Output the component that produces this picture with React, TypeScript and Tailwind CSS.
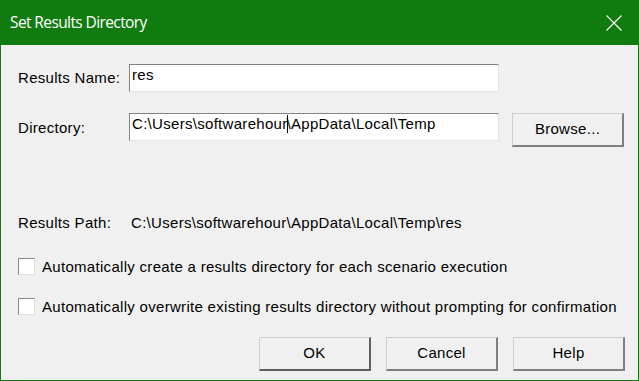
import React from 'react';

function Input({ value, caretAt }: { value: string; caretAt?: number }) {
  const before = caretAt !== undefined ? value.slice(0, caretAt) : value;
  const after = caretAt !== undefined ? value.slice(caretAt) : '';
  return (
    <div className="w-[370px] h-[28px] bg-white border border-t-[#828282] border-l-[#828282] border-r-[#e3e3e3] border-b-[#e3e3e3] pl-[2px] pt-[1px] text-[15px] leading-[18px] text-black whitespace-nowrap overflow-hidden">
      {before}
      {caretAt !== undefined && <span className="inline-block w-px h-[18px] bg-black align-top -mx-px" />}
      {after}
    </div>
  );
}

function Button({ label, isDefault }: { label: string; isDefault?: boolean }) {
  return (
    <button
      className={
        'w-[112px] h-[34px] bg-[#f0f0f0] border border-r-2 border-b-2 text-[15px] text-black border-t-[#cdcdcd] border-l-[#cdcdcd] ' +
        (isDefault ? 'border-r-[#5f5f5f] border-b-[#5f5f5f]' : 'border-r-[#808080] border-b-[#808080]')
      }
    >
      {label}
    </button>
  );
}

function Checkbox({ label }: { label: string }) {
  return (
    <div className="flex items-center gap-[7px] h-[18px]">
      <div className="w-[17px] h-[17px] bg-white border border-t-[#8a8a8a] border-l-[#8a8a8a] border-r-[#dcdcdc] border-b-[#dcdcdc]" />
      <span className="text-[15px] leading-[18px] text-black">{label}</span>
    </div>
  );
}

export default function App() {
  return (
    <div className="w-[639px] h-[381px] flex flex-col bg-[#107c10] font-['Liberation_Sans',Arial,sans-serif] tracking-[0.3px]">
      <div className="h-[45px] flex items-center justify-between pl-[10px] pr-[17px] text-white">
        <span className="text-[15.5px] font-['Open_Sans',sans-serif] tracking-[-0.6px]">Set Results Directory</span>
        <svg width="16" height="16" viewBox="0 0 16 16" className="mt-[1px]">
          <path d="M0.5 0.5 L15.5 15.5 M15.5 0.5 L0.5 15.5" stroke="white" strokeWidth="1.1" />
        </svg>
      </div>
      <div className="flex-1 mx-px mb-px bg-[#f0f0f0] flex flex-col pl-[17px] pr-[13px]">
        <div className="flex items-center mt-[19px]">
          <span className="w-[111px] text-[15px] text-black">Results Name:</span>
          <Input value="res" />
        </div>
        <div className="flex items-start mt-[21px]">
          <span className="w-[111px] text-[15px] text-black mt-[4px]">Directory:</span>
          <Input value="C:\Users\softwarehour\AppData\Local\Temp" caretAt={21} />
          <div className="ml-[13px]">
            <Button label="Browse..." />
          </div>
        </div>
        <div className="flex items-center mt-[65px] text-[15px] text-black">
          <span className="w-[113px]">Results Path:</span>
          <span>C:\Users\softwarehour\AppData\Local\Temp\res</span>
        </div>
        <div className="mt-[23px] flex flex-col gap-[22px]">
          <Checkbox label="Automatically create a results directory for each scenario execution" />
          <Checkbox label="Automatically overwrite existing results directory without prompting for confirmation" />
        </div>
        <div className="mt-[21px] flex justify-end gap-[15px]">
          <Button label="OK" isDefault />
          <Button label="Cancel" />
          <Button label="Help" />
        </div>
      </div>
    </div>
  );
}
